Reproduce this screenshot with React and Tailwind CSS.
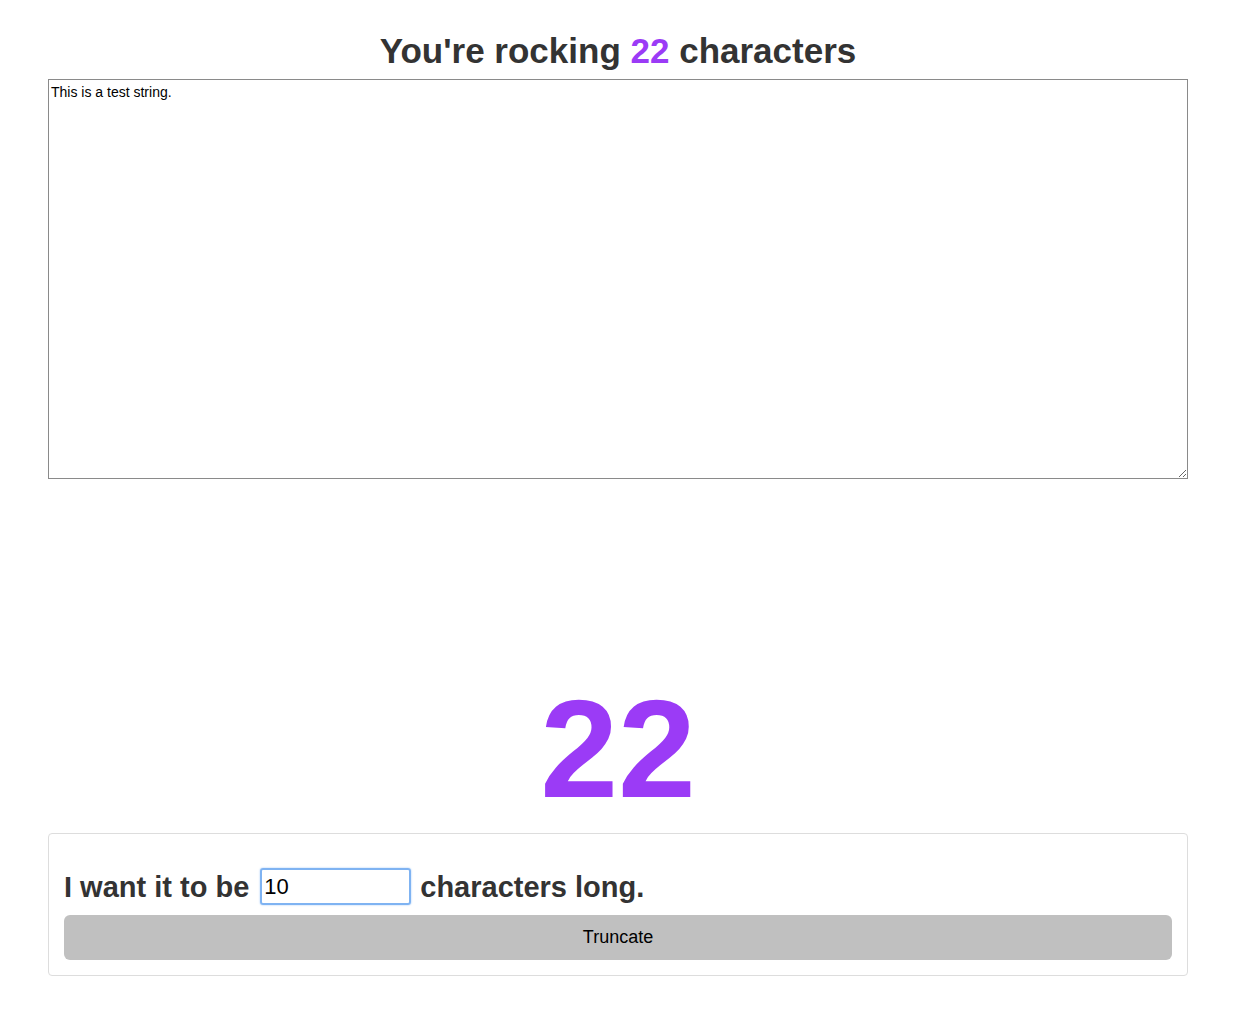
export default function App() {
  const text = 'This is a test string.';
  const count = text.length;

  return (
    <div className="min-h-screen bg-white font-['Liberation_Sans',Arial,sans-serif] text-[#333]">
      <div className="ml-[48px] w-[1140px] pt-[29px]">
        <h1 className="text-center text-[35px] font-bold leading-[44px] mb-[6px]">
          You're rocking <span className="text-[#9b3bf6]">{count}</span> characters
        </h1>
        <textarea
          defaultValue={text}
          className="block w-full h-[400px] border border-[#8a8a8a] px-[2px] py-[4px] text-[14px] leading-[16px] text-black outline-none resize-y"
        />
        <div className="mt-[200px] text-center text-[140px] font-bold leading-[140px] text-[#9b3bf6]">
          {count}
        </div>
        <div className="mt-[14px] border border-[#ddd] rounded-[4px] px-[15px] pt-[34px] pb-[15px]">
          <div className="flex items-center text-[29px] font-bold leading-[36px]">
            <span>I want it to be</span>
            <input
              defaultValue="10"
              className="ml-[11px] mr-[9px] w-[151px] h-[37px] border-2 border-[#7fb3f2] rounded-[3px] px-[2px] text-[22px] font-normal text-black outline-none shadow-[0_0_2px_#9cc4f5]"
            />
            <span>characters long.</span>
          </div>
          <button className="mt-[10px] block w-full h-[45px] rounded-[6px] bg-[#c0c0c0] text-[18px] text-black">
            Truncate
          </button>
        </div>
      </div>
    </div>
  );
}
